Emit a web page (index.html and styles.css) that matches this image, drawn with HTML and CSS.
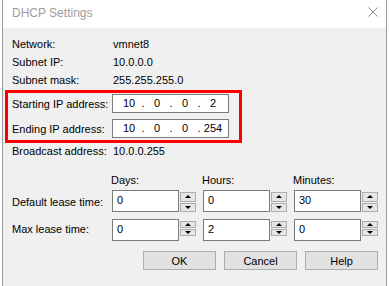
FILE: index.html
```html
<!DOCTYPE html>
<html lang="en">
<head>
  <meta charset="UTF-8">
  <title>DHCP Settings</title>
  <link rel="stylesheet" href="styles.css">
</head>
<body>
  <div class="window">
    <div class="titlebar">
      <span class="title">DHCP Settings</span>
      <svg class="close" width="10" height="10" viewBox="0 0 10 10">
        <path d="M0.5 0.5 L9.5 9.5 M9.5 0.5 L0.5 9.5" stroke="#8a8a8a" stroke-width="1" fill="none"/>
      </svg>
    </div>

    <div class="content">
      <div class="row"><span class="label">Network:</span><span>vmnet8</span></div>
      <div class="row"><span class="label">Subnet IP:</span><span>10.0.0.0</span></div>
      <div class="row"><span class="label">Subnet mask:</span><span>255.255.255.0</span></div>

      <div class="range">
        <div class="ip-row">
          <span class="label">Starting IP address:</span>
          <div class="ip-field">
            <span class="octet">10</span><span class="dot">.</span>
            <span class="octet">0</span><span class="dot">.</span>
            <span class="octet">0</span><span class="dot">.</span>
            <span class="octet">2</span>
          </div>
        </div>
        <div class="ip-row">
          <span class="label">Ending IP address:</span>
          <div class="ip-field">
            <span class="octet">10</span><span class="dot">.</span>
            <span class="octet">0</span><span class="dot">.</span>
            <span class="octet">0</span><span class="dot">.</span>
            <span class="octet">254</span>
          </div>
        </div>
      </div>

      <div class="row broadcast"><span class="label">Broadcast address:</span><span>10.0.0.255</span></div>

      <div class="lease">
        <span></span>
        <span class="col-head">Days:</span>
        <span class="col-head">Hours:</span>
        <span class="col-head">Minutes:</span>

        <span class="lease-label">Default lease time:</span>
        <div class="spin"><div class="spin-input">0</div><div class="spin-btns"><span class="up"></span><span class="down"></span></div></div>
        <div class="spin"><div class="spin-input">0</div><div class="spin-btns"><span class="up"></span><span class="down"></span></div></div>
        <div class="spin"><div class="spin-input">30</div><div class="spin-btns"><span class="up"></span><span class="down"></span></div></div>

        <span class="lease-label">Max lease time:</span>
        <div class="spin"><div class="spin-input">0</div><div class="spin-btns"><span class="up"></span><span class="down"></span></div></div>
        <div class="spin"><div class="spin-input">2</div><div class="spin-btns"><span class="up"></span><span class="down"></span></div></div>
        <div class="spin"><div class="spin-input">0</div><div class="spin-btns"><span class="up"></span><span class="down"></span></div></div>
      </div>

      <div class="buttons">
        <button>OK</button>
        <button>Cancel</button>
        <button>Help</button>
      </div>
    </div>
  </div>
</body>
</html>
```

FILE: styles.css
```css
body {
  margin: 0;
  background: #fff;
  font-family: 'Segoe UI', 'Liberation Sans', Arial, sans-serif;
  font-size: 11px;
  color: #000;
}

.window {
  margin-left: 2px;
  width: 383px;
  height: 286px;
  border-left: 1px solid #9a9a9a;
  border-right: 1px solid #9a9a9a;
  background: #f0f0f0;
  overflow: hidden;
}

.titlebar {
  height: 28px;
  background: #fff;
  display: flex;
  align-items: center;
  padding-left: 9px;
  padding-right: 8px;
}

.title {
  font-size: 12px;
  color: #9c9c9c;
  margin-top: -2px;
}

.close {
  margin-left: auto;
  margin-top: -4px;
}

.content {
  padding: 7px 0 0 9px;
}

.row {
  display: flex;
  height: 18px;
  line-height: 18px;
}

.row .label {
  width: 101px;
}

.range {
  width: 227px;
  margin: 1px 0 0 -7px;
  border: 3px solid #f00;
  padding: 1px 0 2px 4px;
  display: flex;
  flex-direction: column;
  gap: 6px;
}

.ip-row {
  display: flex;
  align-items: center;
}

.ip-row .label {
  width: 100px;
}

.ip-field {
  width: 110px;
  height: 17px;
  border: 1px solid #7a7a7a;
  background: #fff;
  display: flex;
  align-items: center;
  padding-left: 5px;
  line-height: 17px;
}

.octet {
  width: 22px;
  text-align: center;
}

.dot {
  width: 6px;
  text-align: center;
}

.broadcast {
  margin-top: -1px;
}

.lease {
  margin-top: 12px;
  display: grid;
  grid-template-columns: 93px 84px 84px 84px;
  grid-template-rows: 16px 22px 22px;
  column-gap: 7px;
  row-gap: 2px;
}

.col-head {
  line-height: 16px;
  margin-left: -1px;
}

.lease-label {
  align-self: center;
  padding-top: 2px;
}

.lease > :nth-child(n+9) {
  margin-top: 5px;
}

.spin {
  display: flex;
  gap: 1px;
}

.spin-input {
  width: 67px;
  height: 22px;
  border: 1px solid #7a7a7a;
  background: #fff;
  padding-left: 4px;
  box-sizing: border-box;
  line-height: 18px;
}

.spin-btns {
  display: flex;
  flex-direction: column;
  gap: 1px;
  margin-top: 2px;
}

.spin-btns span {
  width: 14px;
  height: 8px;
  border: 1px solid #adadad;
  background: #e5e5e5;
  display: flex;
  align-items: center;
  justify-content: center;
}

.spin-btns .up::after {
  content: '';
  border-left: 3px solid transparent;
  border-right: 3px solid transparent;
  border-bottom: 3px solid #000;
}

.spin-btns .down::after {
  content: '';
  border-left: 3px solid transparent;
  border-right: 3px solid transparent;
  border-top: 3px solid #000;
}

.buttons {
  display: flex;
  justify-content: flex-end;
  gap: 8px;
  margin-top: 15px;
  padding-right: 8px;
}

button {
  width: 73px;
  height: 19px;
  padding: 0;
  border: 1px solid #adadad;
  background: #e1e1e1;
  font-family: inherit;
  font-size: 11px;
  color: #000;
}
```
